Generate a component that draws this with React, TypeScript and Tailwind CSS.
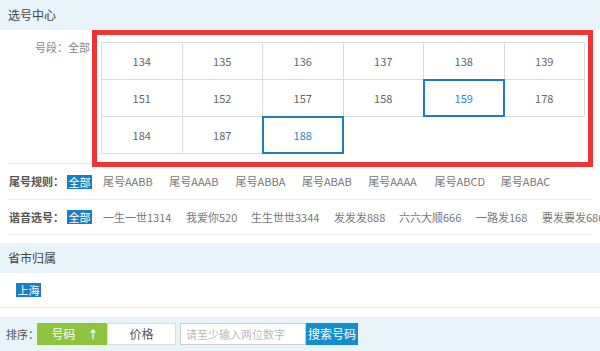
import React from "react";

const rows = [
  ["134", "135", "136", "137", "138", "139"],
  ["151", "152", "157", "158", "159", "178"],
  ["184", "187", "188"],
];
const selected = new Set(["159", "188"]);

const tail = ["尾号AABB", "尾号AAAB", "尾号ABBA", "尾号ABAB", "尾号AAAA", "尾号ABCD", "尾号ABAC"];
const homo: [string, string][] = [
  ["一生一世1314", "w-[83px]"],
  ["我爱你520", "w-[65px]"],
  ["生生世世3344", "w-[83px]"],
  ["发发发888", "w-[65px]"],
  ["六六大顺666", "w-[77px]"],
  ["一路发168", "w-[66px]"],
  ["要发要发686", "w-[70px]"],
];

export default function App() {
  const font = { fontFamily: '"Noto Sans CJK SC", "Noto Sans", sans-serif' };
  return (
    <div className="w-[600px] h-[351px] overflow-hidden bg-white text-[#333]" style={font}>
      <div className="h-[30px] bg-[#e9f3fa] flex items-center pl-[8px] text-[12px] text-[#444]">选号中心</div>

      <div className="flex mx-[8px] border-b border-[#e8e8e8] h-[134px]">
        <div className="shrink-0 w-[84px] text-right pr-[2px] pt-[10px] text-[11px] text-[#888] leading-[15px] whitespace-nowrap">号段：全部</div>
        <div className="shrink-0 relative z-10 w-[501px] h-[137px] border-[5px] border-[#ee3535] pt-[7px] pl-[4px]">
          <div className="w-[484px] border-l border-t border-[#dcdcdc]">
            {rows.map((r, i) => (
              <div key={i} className="flex">
                {r.map((n) => (
                  <div
                    key={n}
                    className={`relative shrink-0 w-[80.5px] h-[37px] border-r border-b border-[#dcdcdc] flex items-center justify-center text-[11px] ${selected.has(n) ? "text-[#2e86c8]" : "text-[#666]"}`}
                  >
                    {selected.has(n) && <div className="absolute inset-[-1px] border-2 border-[#1f7dbf]" />}
                    <span className="relative">{n}</span>
                  </div>
                ))}
              </div>
            ))}
          </div>
        </div>
      </div>

      <div className="flex items-center mx-[8px] h-[36px] border-b border-[#ececec] pl-[1px] text-[11px] whitespace-nowrap">
        <span className="shrink-0 font-bold text-[#555] w-[58px]">尾号规则：</span>
        <span className="shrink-0 bg-[#1a7fc2] text-white leading-[14px] w-[25px] text-center">全部</span>
        <div className="flex ml-[11px]">
          {tail.map((t) => (
            <span key={t} className="shrink-0 w-[66.3px] text-[#777]">{t}</span>
          ))}
        </div>
      </div>

      <div className="flex items-center mx-[8px] h-[35px] border-b border-[#f0f0f0] pl-[1px] text-[11px] whitespace-nowrap">
        <span className="shrink-0 font-bold text-[#555] w-[58px]">谐音选号：</span>
        <span className="shrink-0 bg-[#1a7fc2] text-white leading-[14px] w-[25px] text-center">全部</span>
        <div className="flex ml-[11px] text-[#777]">
          {homo.map(([t, w]) => (
            <span key={t} className={`shrink-0 ${w}`}>{t}</span>
          ))}
        </div>
      </div>

      <div className="h-[8px]" />
      <div className="h-[30px] bg-[#e9f3fa] flex items-center pl-[8px] text-[12px] text-[#444]">省市归属</div>
      <div className="h-[35px] border-b border-[#e8e8e8] flex items-center pl-[16px]">
        <span className="bg-[#1a7fc2] text-white text-[11px] leading-[14px] w-[25px] text-center whitespace-nowrap">上海</span>
      </div>
      <div className="h-[9px]" />
      <div className="h-[34px] bg-[#e9f3fa] flex items-center pl-[6px] text-[11px] whitespace-nowrap">
        <span className="shrink-0 w-[31px] text-[#555]">排序：</span>
        <div className="shrink-0 w-[70px] h-[22px] bg-[#8cc43e] text-white flex items-center justify-center gap-[12px] text-[12px]">
          <span className="ml-[6px]">号码</span>
          <span className="text-[11px] font-bold">↑</span>
        </div>
        <div className="shrink-0 w-[69px] h-[22px] bg-white border border-[#ddd] flex items-center justify-center text-[12px] text-[#555]">价格</div>
        <div className="shrink-0 ml-[4px] w-[126px] h-[22px] bg-white border border-[#ccc] flex items-center pl-[5px] text-[11px] text-[#bbb]">请至少输入两位数字</div>
        <div className="shrink-0 w-[52px] h-[22px] bg-[#168dcd] text-white flex items-center justify-center text-[12px]">搜索号码</div>
      </div>
    </div>
  );
}
